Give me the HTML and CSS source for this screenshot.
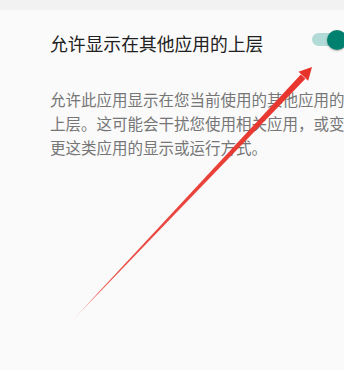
FILE: index.html
```html
<!DOCTYPE html>
<html lang="zh-CN">
<head>
<meta charset="utf-8">
<link rel="stylesheet" href="styles.css">
</head>
<body>
<div class="page">
  <div class="top-band"></div>
  <div class="row">
    <div class="title">允许显示在其他应用的上层</div>
    <div class="toggle"><div class="track"></div><div class="thumb"></div></div>
  </div>
  <p class="desc">允许此应用显示在您当前使用的其他应用的上层。这可能会干扰您使用相关应用，或变更这类应用的显示或运行方式。</p>
  <svg class="arrow" width="344" height="370" viewBox="0 0 344 370">
    <defs>
      <linearGradient id="fade" gradientUnits="userSpaceOnUse" x1="70" y1="323" x2="312" y2="67">
        <stop offset="0" stop-color="#e8332b" stop-opacity="0.05"/>
        <stop offset="0.12" stop-color="#e8332b" stop-opacity="0.85"/>
        <stop offset="1" stop-color="#e8332b" stop-opacity="1"/>
      </linearGradient>
    </defs>
    <polygon points="69.5,323.5 305.4,78.8 300.8,74.4" fill="url(#fade)"/>
    <polygon points="312,67 308.2,80.8 298.5,71.8" fill="#e8332b"/>
  </svg>
</div>
</body>
</html>
```
FILE: styles.css
```css
html, body {
  margin: 0;
  padding: 0;
  background: #fafafa;
}
.page {
  position: relative;
  width: 344px;
  height: 370px;
  overflow: hidden;
  background: #fafafa;
  font-family: "Noto Sans CJK SC", "Noto Sans", sans-serif;
}
.top-band {
  height: 10px;
  background: #f2f2f2;
}
.row {
  display: flex;
  align-items: center;
  height: 65px;
  padding-left: 50px;
}
.title {
  font-size: 17.8px;
  color: #212121;
  line-height: 24px;
}
.toggle {
  position: relative;
  margin-left: auto;
  margin-right: -3px;
  width: 35px;
  height: 20px;
  margin-bottom: 6px;
  flex-shrink: 0;
}
.track {
  position: absolute;
  left: 0;
  top: 3.5px;
  width: 34px;
  height: 13px;
  border-radius: 7px;
  background: #b2dad6;
}
.thumb {
  position: absolute;
  left: 15px;
  top: 0;
  width: 20px;
  height: 20px;
  border-radius: 50%;
  background: #00806f;
  box-shadow: 0 1px 2px rgba(0,0,0,0.3);
}
.desc {
  margin: 12px 0 0 50px;
  width: 300px;
  font-size: 15.5px;
  line-height: 24px;
  color: #767676;
}
.arrow {
  position: absolute;
  left: 0;
  top: 0;
}
```
